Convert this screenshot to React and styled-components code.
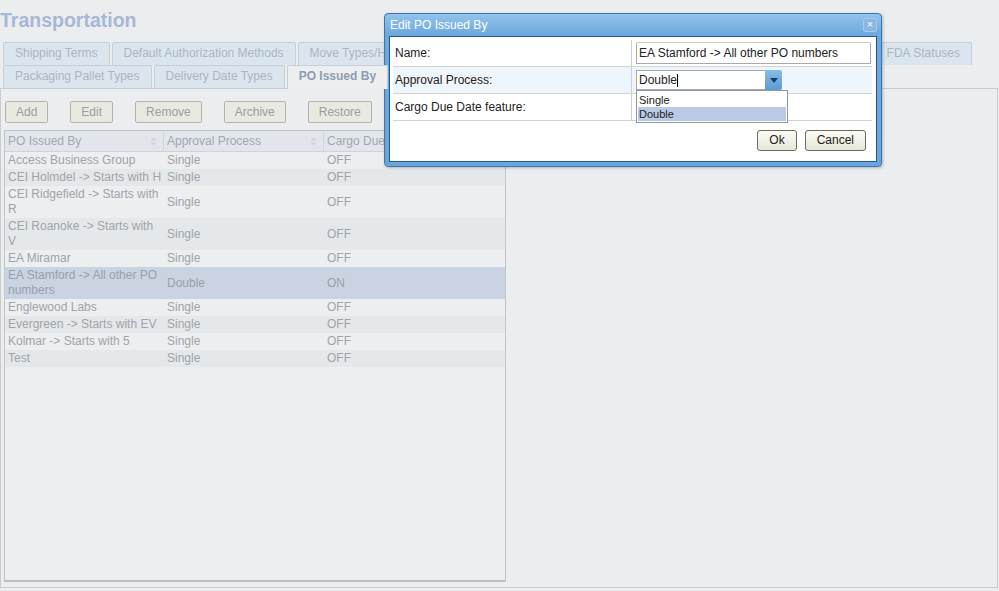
import React from 'react'
import styled, {createGlobalStyle} from 'styled-components'

const GlobalStyle = createGlobalStyle`
    html, body {
      margin: 0;
      padding: 0;
      background: #ecedef;
      font-family: "Liberation Sans", Arial, sans-serif;
      font-size: 12px;
    }
`

const tabsTop = [
    {label: 'Shipping Terms'},
    {label: 'Default Authorization Methods'},
    {label: 'Move Types/Handling Codes', w: 180},
    {label: 'Customs Entry Types', w: 190},
    {label: 'Port of Entry Codes', w: 201},
    {label: 'FDA Statuses'},
]

const tabsFront = [
    {label: 'Packaging Pallet Types'},
    {label: 'Delivery Date Types'},
    {label: 'PO Issued By', active: true},
]

const rows = [
    ['Access Business Group', 'Single', 'OFF'],
    ['CEI Holmdel -> Starts with H', 'Single', 'OFF'],
    ['CEI Ridgefield -> Starts with R', 'Single', 'OFF'],
    ['CEI Roanoke -> Starts with V', 'Single', 'OFF'],
    ['EA Miramar', 'Single', 'OFF'],
    ['EA Stamford -> All other PO numbers', 'Double', 'ON'],
    ['Englewood Labs', 'Single', 'OFF'],
    ['Evergreen -> Starts with EV', 'Single', 'OFF'],
    ['Kolmar -> Starts with 5', 'Single', 'OFF'],
    ['Test', 'Single', 'OFF'],
]

const SortIcon = () => (
    <svg width="7" height="9" viewBox="0 0 7 9">
        <path d="M3.5 0.5 L6.5 3.5 L0.5 3.5 Z" fill="#cdd3d9"/>
        <path d="M3.5 8.5 L6.5 5.5 L0.5 5.5 Z" fill="#cdd3d9"/>
    </svg>
)

export default function App() {
    return (<Page>
        <GlobalStyle/>
        <Title>Transportation</Title>
        <TabRow>
            {tabsTop.map(t => <Tab key={t.label} $w={t.w}>{t.label}</Tab>)}
        </TabRow>
        <TabRow>
            {tabsFront.map(t => <Tab key={t.label} $active={t.active}>{t.label}</Tab>)}
        </TabRow>
        <Panel>
            <Toolbar>
                <ToolButton>Add</ToolButton>
                <ToolButton>Edit</ToolButton>
                <ToolButton>Remove</ToolButton>
                <ToolButton>Archive</ToolButton>
                <ToolButton>Restore</ToolButton>
            </Toolbar>
            <Grid>
                <GridHead>
                    <HeadCell>PO Issued By<SortIcon/></HeadCell>
                    <HeadCell>Approval Process<SortIcon/></HeadCell>
                    <HeadCell>Cargo Due Date feature</HeadCell>
                </GridHead>
                {rows.map((r, i) => (
                    <GridRow key={r[0]} $alt={i % 2 === 1} $selected={r[2] === 'ON'}>
                        <Cell>{r[0]}</Cell>
                        <Cell $middle>{r[1]}</Cell>
                        <Cell $middle>{r[2]}</Cell>
                    </GridRow>
                ))}
            </Grid>
        </Panel>

        <Dialog>
            <DialogTitle>
                <span>Edit PO Issued By</span>
                <CloseBox>×</CloseBox>
            </DialogTitle>
            <DialogBody>
                <FormRow>
                    <FormLabel>Name:</FormLabel>
                    <FormValue>
                        <TextInput>EA Stamford -&gt; All other PO numbers</TextInput>
                    </FormValue>
                </FormRow>
                <FormRow $shaded>
                    <FormLabel>Approval Process:</FormLabel>
                    <FormValue>
                        <Combo>
                            <ComboText>Double<Caret/></ComboText>
                            <ComboArrow>
                                <svg width="8" height="5" viewBox="0 0 8 5">
                                    <path d="M0 0 H8 L4 5 Z" fill="#1b3a66"/>
                                </svg>
                            </ComboArrow>
                            <DropList>
                                <DropItem>Single</DropItem>
                                <DropItem $hot>Double</DropItem>
                            </DropList>
                        </Combo>
                    </FormValue>
                </FormRow>
                <FormRow>
                    <FormLabel>Cargo Due Date feature:</FormLabel>
                    <FormValue/>
                </FormRow>
                <DialogButtons>
                    <DialogButton>Ok</DialogButton>
                    <DialogButton>Cancel</DialogButton>
                </DialogButtons>
            </DialogBody>
        </Dialog>
    </Page>);
}

const Page = styled.div `
    position: relative;
    width: 999px;
    height: 591px;
    overflow: hidden;
`

const Title = styled.h1 `
    margin: 0;
    height: 42px;
    line-height: 41px;
    font-size: 19.5px;
    font-weight: bold;
    color: #a6b8d5;
`

const TabRow = styled.div `
    display: flex;
    gap: 2px;
    height: 23px;
    padding-left: 3px;
`

const Tab = styled.div `
    box-sizing: border-box;
    width: ${p => p.$w ? p.$w + 'px' : 'auto'};
    height: ${p => p.$active ? '24px' : '23px'};
    padding: 0 11px;
    line-height: 21px;
    white-space: nowrap;
    overflow: hidden;
    border: 1px solid #c4cfda;
    border-bottom: none;
    border-radius: 2px 2px 0 0;
    background: ${p => p.$active ? '#eceef0' : '#dbe5ee'};
    color: ${p => p.$active ? '#8e9cb1' : '#abb6c4'};
    font-weight: ${p => p.$active ? 'bold' : 'normal'};
    position: relative;
    z-index: ${p => p.$active ? 1 : 0};
`

const Panel = styled.div `
    box-sizing: border-box;
    width: 998px;
    height: 500px;
    border: 1px solid #c6ccd2;
    padding: 12px 0 0 3px;
`

const Toolbar = styled.div `
    display: flex;
    gap: 22px;
    margin-left: 1px;
`

const ToolButton = styled.div `
    box-sizing: border-box;
    height: 22px;
    line-height: 20px;
    padding: 0 10px;
    border: 1px solid #b4b4aa;
    border-radius: 2px;
    background: #e8e9e2;
    color: #9d9d9d;
`

const Grid = styled.div `
    box-sizing: border-box;
    margin-top: 7px;
    width: 502px;
    height: 452px;
    border: 1px solid #c0c6cc;
    border-bottom: 2px solid #b9bfc5;
    background: #eceef0;
`

const GridHead = styled.div `
    display: grid;
    grid-template-columns: 159px 160px 1fr;
    height: 20px;
    background: #e2e6ea;
    border-bottom: 1px solid #ccd3da;
`

const HeadCell = styled.div `
    display: flex;
    align-items: center;
    justify-content: space-between;
    padding: 0 6px 0 3px;
    border-right: 1px solid #d0d6dc;
    color: #a0a8b1;
    white-space: nowrap;
    overflow: hidden;
`

const GridRow = styled.div `
    display: grid;
    grid-template-columns: 159px 160px 1fr;
    background: ${p => p.$selected ? '#c9d3e1' : p.$alt ? '#e4e8eb' : '#eceef0'};
    color: ${p => p.$selected ? '#97a1ad' : '#a0a4a9'};
`

const Cell = styled.div `
    padding: 1px 2px 1px 3px;
    line-height: 15px;
    align-self: ${p => p.$middle ? 'center' : 'stretch'};
`

const Dialog = styled.div `
    position: absolute;
    left: 384px;
    top: 13px;
    width: 498px;
    height: 154px;
    box-sizing: border-box;
    display: flex;
    flex-direction: column;
    padding: 0 4px 4px;
    border: 1px solid #3c76b0;
    border-radius: 4px;
    background: linear-gradient(#92c4ea, #6ea9dd 20px, #6aa6dc);
    box-shadow: 1px 1px 3px rgba(0, 0, 0, 0.25);
`

const DialogTitle = styled.div `
    height: 22px;
    display: flex;
    align-items: center;
    justify-content: space-between;
    padding-left: 1px;
    color: #ffffff;
`

const CloseBox = styled.div `
    box-sizing: border-box;
    width: 14px;
    height: 14px;
    border: 1px solid #a4cbeb;
    border-radius: 2px;
    background: #88b8e2;
    color: #ffffff;
    font-size: 11px;
    line-height: 11px;
    text-align: center;
`

const DialogBody = styled.div `
    flex: 1;
    background: #ffffff;
    border: 1px solid #22598f;
    padding: 3px 4px 0 3px;
    color: #222;
`

const FormRow = styled.div `
    display: flex;
    height: 26px;
    border-bottom: 1px solid #d3d3d3;
    background: ${p => p.$shaded ? '#eef5fb' : '#ffffff'};
`

const FormLabel = styled.div `
    width: 239px;
    box-sizing: border-box;
    border-right: 1px solid #cfcfcf;
    padding-left: 2px;
    line-height: 26px;
`

const FormValue = styled.div `
    flex: 1;
    display: flex;
    align-items: center;
    padding-left: 4px;
`

const TextInput = styled.div `
    box-sizing: border-box;
    width: 235px;
    height: 22px;
    line-height: 20px;
    padding-left: 2px;
    border: 1px solid #a9a9a9;
    border-top-color: #c8c8c8;
    border-radius: 2px 2px 0 0;
    white-space: nowrap;
`

const Combo = styled.div `
    position: relative;
    display: flex;
    width: 146px;
    height: 20px;
`

const ComboText = styled.div `
    flex: 1;
    box-sizing: border-box;
    border: 1px solid #a6aab0;
    border-right: none;
    background: #ffffff;
    padding-left: 2px;
    line-height: 18px;
    display: flex;
    align-items: center;
`

const Caret = styled.span `
    display: inline-block;
    width: 1px;
    height: 13px;
    background: #000;
`

const ComboArrow = styled.div `
    width: 17px;
    display: flex;
    align-items: center;
    justify-content: center;
    border-radius: 0 2px 2px 0;
    background: linear-gradient(#86bde8, #5d9bd3);
`

const DropList = styled.div `
    position: absolute;
    top: 20px;
    left: 0;
    width: 152px;
    height: 33px;
    box-sizing: border-box;
    padding: 2px 1px 0;
    border: 1px solid #8a96a4;
    background: #ffffff;
    z-index: 2;
`

const DropItem = styled.div `
    height: 14px;
    line-height: 14px;
    font-size: 11px;
    padding-left: 1px;
    background: ${p => p.$hot ? '#b9c9e6' : 'transparent'};
`

const DialogButtons = styled.div `
    display: flex;
    justify-content: flex-end;
    gap: 8px;
    margin-top: 9px;
    padding-right: 6px;
`

const DialogButton = styled.div `
    box-sizing: border-box;
    height: 21px;
    line-height: 19px;
    padding: 0 11px;
    border: 1px solid #6a6a5e;
    border-radius: 3px;
    background: linear-gradient(#fbfbf5, #e6e6da);
    color: #222;
`
